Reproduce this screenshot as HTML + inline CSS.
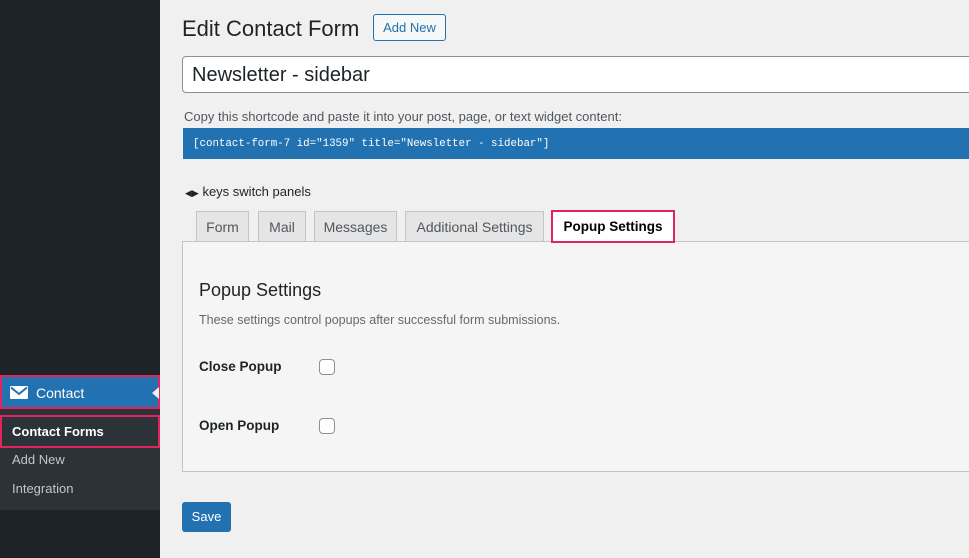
<!DOCTYPE html><html><head><style>
*{box-sizing:border-box;margin:0;padding:0}
body{width:969px;height:558px;overflow:hidden;background:#f0f0f1;font-family:"Liberation Sans",sans-serif;color:#1d2327;position:relative;font-size:13px}
.a{position:absolute}
</style></head><body>
<div class="a" style="left:0;top:0;width:160px;height:558px;background:#1d2327"></div>
<div class="a" style="left:0;top:375px;width:160px;height:34px;background:#2271b1;border:2px solid #e0245e"></div>
<svg class="a" style="left:10px;top:386px" width="18" height="13" viewBox="0 0 18 13"><rect width="18" height="13" rx="1" fill="#fff"/><path d="M1 1.5 L9 8 L17 1.5" stroke="#2271b1" stroke-width="2" fill="none"/></svg>
<div class="a" style="left:36px;top:385px;color:#fff;font-size:14px">Contact</div>
<div class="a" style="left:152px;top:387px;width:0;height:0;border-top:6px solid transparent;border-bottom:6px solid transparent;border-right:7px solid #f0f0f1"></div>
<div class="a" style="left:0;top:409px;width:160px;height:101px;background:#2c3338"></div>
<div class="a" style="left:0;top:415px;width:160px;height:33px;border:2px solid #e0245e"></div>
<div class="a" style="left:12px;top:424px;color:#fff;font-weight:bold;font-size:13px">Contact Forms</div>
<div class="a" style="left:12px;top:452px;color:#c3c4c7;font-size:13px">Add New</div>
<div class="a" style="left:12px;top:481px;color:#c3c4c7;font-size:13px">Integration</div>

<div class="a" style="left:182px;top:16px;font-size:22px;color:#1d2327">Edit Contact Form</div>
<div class="a" style="left:373px;top:14px;width:73px;height:27px;border:1px solid #2271b1;border-radius:3px;color:#2271b1;background:#f6f7f7;font-size:13px;text-align:center;line-height:25px">Add New</div>
<div class="a" style="left:182px;top:56px;width:800px;height:37px;border:1px solid #8c8f94;border-radius:4px;background:#fff;font-size:20px;padding:7px 9px">Newsletter - sidebar</div>
<div class="a" style="left:184px;top:109px;color:#50575e;font-size:13px">Copy this shortcode and paste it into your post, page, or text widget content:</div>
<div class="a" style="left:183px;top:128px;width:786px;height:31px;background:#2271b1;color:#fff;font-family:'Liberation Mono',monospace;font-size:10.8px;padding:10px 10px">[contact-form-7 id="1359" title="Newsletter - sidebar"]</div>
<div class="a" style="left:185px;top:184px;font-size:13px"><span style="font-size:9px">◀▶</span> keys switch panels</div>
<div class="a" style="left:182px;top:241px;width:800px;height:231px;border:1px solid #c3c4c7;background:#f5f5f5"></div>
<div class="a" style="left:196px;top:211px;width:53px;height:31px;border:1px solid #c3c4c7;background:#e5e5e5;color:#50575e;font-size:14px;text-align:center;line-height:30px">Form</div>
<div class="a" style="left:258px;top:211px;width:48px;height:31px;border:1px solid #c3c4c7;background:#e5e5e5;color:#50575e;font-size:14px;text-align:center;line-height:30px">Mail</div>
<div class="a" style="left:314px;top:211px;width:83px;height:31px;border:1px solid #c3c4c7;background:#e5e5e5;color:#50575e;font-size:14px;text-align:center;line-height:30px">Messages</div>
<div class="a" style="left:405px;top:211px;width:139px;height:31px;border:1px solid #c3c4c7;background:#e5e5e5;color:#50575e;font-size:14px;text-align:center;line-height:30px">Additional Settings</div>
<div class="a" style="left:551px;top:210px;width:124px;height:33px;border:2px solid #e0245e;background:#fff;color:#000;font-weight:bold;font-size:13.5px;text-align:center;line-height:29px">Popup Settings</div>
<div class="a" style="left:199px;top:280px;font-size:18px">Popup Settings</div>
<div class="a" style="left:199px;top:313px;font-size:12.5px;color:#646970">These settings control popups after successful form submissions.</div>
<div class="a" style="left:199px;top:359px;font-size:13.5px;font-weight:bold;color:#1d2327">Close Popup</div>
<div class="a" style="left:319px;top:359px;width:16px;height:16px;border:1px solid #8c8f94;border-radius:4px;background:#fff"></div>
<div class="a" style="left:199px;top:418px;font-size:13.5px;font-weight:bold;color:#1d2327">Open Popup</div>
<div class="a" style="left:319px;top:418px;width:16px;height:16px;border:1px solid #8c8f94;border-radius:4px;background:#fff"></div>
<div class="a" style="left:182px;top:502px;width:49px;height:30px;background:#2271b1;border-radius:3px;color:#fff;font-size:13px;text-align:center;line-height:30px">Save</div>
</body></html>
